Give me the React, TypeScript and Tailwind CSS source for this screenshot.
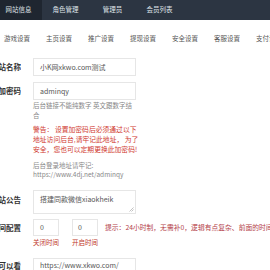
import React from 'react';

const font = { fontFamily: '"Noto Sans CJK SC", "Noto Sans", sans-serif' };

const Label: React.FC<{ text: string; className?: string }> = ({ text, className = '' }) => (
  <div className={`w-[21px] shrink-0 overflow-hidden flex justify-end whitespace-nowrap text-[7.5px] font-bold text-[#333] ${className}`}>
    <span>{text}</span>
  </div>
);

const App: React.FC = () => {
  const topTabs = ['网站信息', '角色管理', '管理员', '会员列表'];
  const subTabs = ['游戏设置', '主页设置', '推广设置', '提现设置', '安全设置', '客服设置', '支付设置'];

  return (
    <div className="w-[270px] h-[270px] overflow-hidden bg-white" style={font}>
      <nav className="h-[20px] bg-[#2c3542] flex">
        <div className="flex -ml-[5px]">
          {topTabs.map((t, i) => (
            <div
              key={t}
              className={`w-[47px] h-[20px] flex items-center justify-center text-[6.5px] text-[#dfe3e8] ${i === 0 ? 'bg-[#1f2630]' : ''}`}
            >
              {t}
            </div>
          ))}
        </div>
      </nav>

      <div className="h-[38px] flex items-center -ml-[4px] whitespace-nowrap">
        {subTabs.map((t) => (
          <div key={t} className="w-[42px] shrink-0 text-center text-[6.5px] text-[#555]">
            {t}
          </div>
        ))}
      </div>

      <div className="flex flex-col">
        <div className="flex items-center gap-[12px]">
          <Label text="网站名称" />
          <div className="w-[103px] h-[18px] border border-[#e6e6e6] flex items-center px-[6px] text-[7px] text-[#555] whitespace-nowrap">
            小K网xkwo.com测试
          </div>
        </div>

        <div className="flex items-center gap-[12px] mt-[6px]">
          <Label text="后台加密码" />
          <div className="w-[103px] h-[18px] border border-[#e6e6e6] flex items-center px-[6px] text-[7px] text-[#555]">
            adminqy
          </div>
        </div>

        <div className="ml-[33px] w-[104px] text-[6.5px] leading-[10px] text-[#888] whitespace-nowrap">
          后台链接不能纯数字 英文跟数字结
          <br />合
        </div>

        <div className="ml-[33px] mt-[4px] text-[6.8px] leading-[10px] text-[#d0392f] whitespace-nowrap">
          警告：&nbsp;设置加密码后必须通过以下
          <br />
          地址访问后台,请牢记此地址，&nbsp;为了
          <br />
          安全，您也可以定期更换此加密码!
        </div>

        <div className="ml-[33px] mt-[7px] text-[6.5px] leading-[8.5px] text-[#888] whitespace-nowrap">
          后台登录地址请牢记:
          <br />
          https://www.4dj.net/adminqy
        </div>

        <div className="flex items-start gap-[12px] mt-[12px]">
          <Label text="网站公告" className="mt-[4px]" />
          <div className="relative w-[103px] h-[24px] border border-[#e6e6e6] px-[6px] pt-[4px] text-[7px] leading-[9px] text-[#555] whitespace-nowrap">
            搭建同款微信xiaokheik
            <svg className="absolute right-[1px] bottom-[1px]" width="5" height="5" viewBox="0 0 5 5">
              <path d="M4.5 0.5 L0.5 4.5 M4.5 2.5 L2.5 4.5" stroke="#999" strokeWidth="0.6" />
            </svg>
          </div>
        </div>

        <div className="flex items-center gap-[12px] mt-[5px] whitespace-nowrap">
          <Label text="时间配置" />
          <div className="flex items-center">
            <div className="w-[26px] h-[17px] border border-[#e6e6e6] flex items-center px-[6px] text-[7px] text-[#555]">0</div>
            <div className="w-[26px] h-[17px] border border-[#e6e6e6] flex items-center px-[5px] text-[7px] text-[#555] ml-[13px]">0</div>
            <div className="ml-[7px] text-[6.8px] text-[#b4424a]">
              提示：24小时制，无需补0，逻辑有点复杂、前面的时间不能大于后面的时间
            </div>
          </div>
        </div>

        <div className="flex ml-[33px] text-[6.5px] leading-[8px] text-[#c0392b] whitespace-nowrap mt-[2px]">
          <div className="w-[39px]">关闭时间</div>
          <div>开启时间</div>
        </div>

        <div className="flex items-start gap-[12px] mt-[12px]">
          <Label text="是否可以看" className="mt-[2px]" />
          <div className="w-[103px] h-[20px] border border-[#e6e6e6] px-[6px] pt-[2px] text-[7px] leading-[8px] text-[#555] whitespace-nowrap">
            https://www.xkwo.com/
          </div>
        </div>
      </div>
    </div>
  );
};

export default App;
